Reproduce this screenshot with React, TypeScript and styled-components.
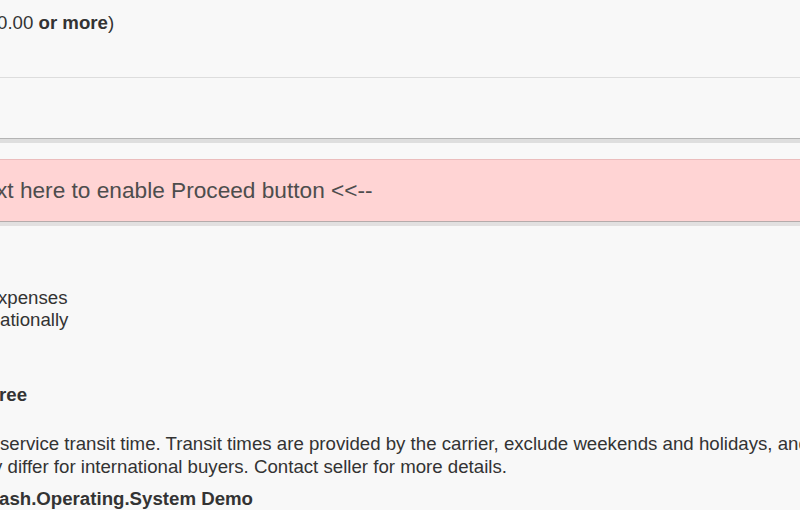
import styled, { createGlobalStyle } from "styled-components";

const GlobalStyle = createGlobalStyle`
  html, body {
    margin: 0;
    padding: 0;
    background: #f8f8f8;
    overflow: hidden;
  }
  body {
    font-family: "Liberation Sans", Arial, sans-serif;
    color: #333;
  }
`;

export default function App() {
  return (
    <Page>
      <GlobalStyle />
      <TopSection>
        <Line $shift={-3}>
          0.00 <b>or more</b>)
        </Line>
      </TopSection>
      <ToolbarSection />
      <Warning>
        <WarningText $shift={-4}>xt here to enable Proceed button &lt;&lt;--</WarningText>
      </Warning>
      <Details>
        <List>
          <Line $shift={-2}>xpenses</Line>
          <Line $shift={0}>ationally</Line>
        </List>
        <Heading $shift={-1}>ree</Heading>
        <Paragraph>
          <Line $shift={0}>
            service transit time. Transit times are provided by the carrier, exclude weekends and holidays, and
          </Line>
          <Line $shift={-7}>y differ for international buyers. Contact seller for more details.</Line>
        </Paragraph>
        <Title $shift={-1}>ash.Operating.System Demo</Title>
      </Details>
    </Page>
  );
}

const Page = styled.div`
  width: 800px;
  height: 510px;
  overflow: hidden;
`;

const Line = styled.div<{ $shift: number }>`
  font-size: 14pt;
  line-height: 22.4px;
  white-space: nowrap;
  margin-left: ${(p) => p.$shift}px;

  b {
    font-weight: bold;
  }
`;

const TopSection = styled.div`
  height: 78px;
  padding-top: 12px;
  box-sizing: border-box;
  border-bottom: 1px solid #dddddd;
`;

const ToolbarSection = styled.div`
  height: 60px;
  border-bottom: 1px solid #b4b4b4;
  box-shadow: 0 4px 0 #dedede;
`;

const Warning = styled.div`
  margin-top: 20px;
  height: 61px;
  display: flex;
  align-items: center;
  background: #ffd4d4;
  border-top: 1px solid #ebbcbc;
  border-bottom: 1px solid #b5abab;
  box-shadow: 0 4px 0 #e2e0e0;
`;

const WarningText = styled.div<{ $shift: number }>`
  font-size: 17pt;
  color: #4d4d4d;
  white-space: nowrap;
  margin-left: ${(p) => p.$shift}px;
`;

const Details = styled.div`
  padding-top: 65px;
`;

const List = styled.div`
  display: flex;
  flex-direction: column;
`;

const Heading = styled(Line)`
  margin-top: 52px;
  font-weight: bold;
`;

const Paragraph = styled.div`
  margin-top: 26px;

  & > div {
    line-height: 23px;
  }
`;

const Title = styled(Line)`
  margin-top: 10px;
  font-weight: bold;
`;
